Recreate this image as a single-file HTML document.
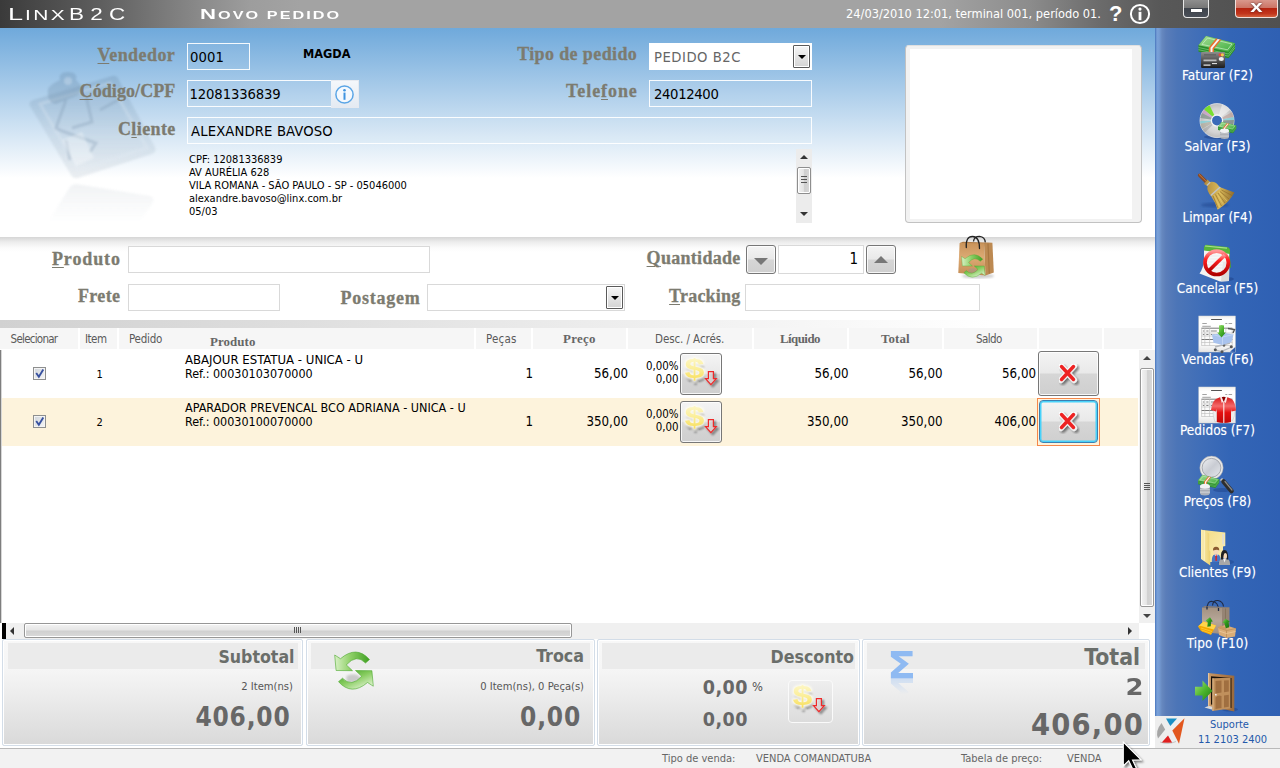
<!DOCTYPE html>
<html lang="pt-BR">
<head>
<meta charset="utf-8">
<title>LinxB2C - Novo pedido</title>
<style>
*{box-sizing:border-box;margin:0;padding:0}
html,body{width:1280px;height:768px;overflow:hidden;background:#fff}
body{position:relative;font-family:"DejaVu Sans Condensed","Liberation Sans",sans-serif;font-size:12px;color:#000}
.abs,.abs-all *{position:absolute}
div,span,svg{position:absolute}
span.i{position:static}
.nw{white-space:nowrap}
/* title bar */
#titlebar{left:0;top:0;width:1280px;height:28px;background:linear-gradient(90deg,#3a3a3a 0px,#444 25px,#5e5e5e 100px,#8a8a8a 200px,#9d9d9d 250px,#a3a3a3 300px,#a3a3a3 940px,#8c8c8c 1030px,#6b6b6b 1100px,#585858 1160px,#505050 1280px)}
.tw{left:0;top:0;height:28px;line-height:28px;white-space:pre;font-family:"Liberation Sans",sans-serif;color:#fff}
.tw .tg{display:inline-block;position:relative;transform-origin:0 50%;vertical-align:baseline}
#dt{right:179px;top:6px;color:#fff;font-size:12.7px;white-space:nowrap}
/* top panel */
#toppanel{left:0;top:28px;width:1155px;height:209px;background:linear-gradient(180deg,#6fa9db 0px,#fff 150px)}
.lbl{font-family:"Liberation Serif",serif;font-weight:bold;color:#7c7b70;font-size:18px;-webkit-text-stroke:.3px #7c7b70;white-space:nowrap;text-align:right;line-height:22px;height:22px}
.lbl u{text-decoration-thickness:1px;text-underline-offset:1.5px}
.inp{border:1px solid rgba(255,255,255,.92);background:rgba(255,255,255,.05);font-size:14.7px;white-space:nowrap;padding-left:3px;line-height:25px}
.inp2{border:1px solid #d9d9d9;background:#fff;font-size:14.7px;white-space:nowrap}
.ddb{border:1px solid #5a5a5a;border-radius:1px;background:linear-gradient(180deg,#f6f6f6,#d4d4d4);box-shadow:inset 0 0 0 1px #fff}
.ddb:after{content:"";position:absolute;left:50%;top:50%;margin:-2px 0 0 -4px;border:4px solid transparent;border-top:4px solid #000;border-bottom:0}
#details{left:189px;top:124.5px;font-size:11px;line-height:13px;white-space:nowrap}
/* sidebar */
#sidebar{left:1155px;top:28px;width:125px;height:688px;background:linear-gradient(90deg,#4876bd 0px,#79a0d8 2px,#769dd5 4px,#6688bf 7px,#5a7db9 11px,#4c75b7 22px,#406eb8 45px,#3365b6 75px,#2f60b3 125px)}
.sb{left:0;width:125px;text-align:center;color:#fff;font-size:13.5px;margin-top:1px;white-space:nowrap;line-height:16px;text-shadow:0 0 1px rgba(255,255,255,.35)}
#support{left:1155px;top:716px;width:125px;height:32px;background:#eee}
#support div{color:#2459ab;font-size:11px;white-space:nowrap;text-align:center;left:30px;width:95px}
/* product panel */
#prodpanel{left:0;top:237px;width:1155px;height:83px;background:linear-gradient(180deg,#d6d6d6 0px,#ececec 5px,#fbfbfb 11px,#fff 15px)}
#band2{left:0;top:320px;width:1155px;height:8px;background:linear-gradient(90deg,#d1d1d1 0,#dcdcdc 250px,#e9e9e9 520px,#f4f4f4 760px,#fff 990px)}
.sbtn{border:1px solid #777;border-radius:3px;background:linear-gradient(180deg,#f4f4f4 0%,#e9e9e9 48%,#d6d6d6 52%,#cfcfcf 100%);box-shadow:inset 0 0 0 1px rgba(255,255,255,.8)}
/* grid */
.hc{top:328px;height:21px;background:#f6f6f6;color:#5a5a5a;font-size:11px;letter-spacing:-.35px;line-height:20px;white-space:nowrap}
.ht{color:#5a5a5a;font-size:11.5px;line-height:18px;white-space:nowrap}
.hb{font-family:"Liberation Serif",serif;font-weight:bold;font-size:12.9px;color:#666}
.hc b{font-family:"Liberation Serif",serif;font-size:12.9px;color:#666;letter-spacing:0}
.row{left:2px;width:1136px;height:48px}
.c{white-space:nowrap;font-size:12.9px;line-height:14px}
.r{text-align:right}
.num{font-size:13.2px}
.cb{width:13px;height:13px;border:1px solid #8e8f8f;background:linear-gradient(135deg,#cfd4db,#f6f6f6);box-shadow:inset 0 0 0 1px #f4f4f4}
/* summary */
.pan{top:639px;height:106.500px;border:1px solid #d3dde8;border-radius:2px;background:linear-gradient(180deg,#f8f8f8 0,#f6f6f6 29px,#f5f5f5 30px,#ececec 56px,#d9d9d9 105px);box-shadow:inset 0 0 0 1px #fff}
.pan>*{margin-top:1px}
.pan .hd{left:4px;right:4px;top:2px;height:26px;background:#ebebeb}
.big{font-weight:bold;color:#676767;white-space:nowrap;text-align:right}
.ttl{font-weight:bold;color:#6a6e6a;white-space:nowrap;text-align:right;font-size:17px}
.sm{color:#555;white-space:nowrap;text-align:right;font-size:11.6px}
#status{left:0;top:748px;width:1280px;height:20px;background:#f2f2f2;border-top:1px solid #b9b9b9;color:#666;font-size:11px}
#status div{top:3px;white-space:nowrap}
</style>
</head>
<body>
<svg width="0" height="0" style="left:0;top:0">
<defs>
<linearGradient id="gold" x1="0" y1="0" x2="0" y2="1"><stop offset="0" stop-color="#fefad8"/><stop offset=".5" stop-color="#fbee98"/><stop offset="1" stop-color="#f7da4a"/></linearGradient>
<filter id="shd" x="-30%" y="-30%" width="170%" height="170%"><feGaussianBlur in="SourceAlpha" stdDeviation="1"/><feOffset dx="2" dy="2.5"/><feComponentTransfer><feFuncA type="linear" slope=".55"/></feComponentTransfer><feMerge><feMergeNode/><feMergeNode in="SourceGraphic"/></feMerge></filter>
<filter id="glow" x="-40%" y="-40%" width="190%" height="190%"><feMorphology in="SourceAlpha" operator="dilate" radius="1.200" result="d"/><feGaussianBlur in="d" stdDeviation="1" result="db"/><feFlood flood-color="#fffdf0" flood-opacity=".95"/><feComposite in2="db" operator="in" result="gl"/><feGaussianBlur in="SourceAlpha" stdDeviation="1.300" result="sb"/><feOffset in="sb" dx="1" dy="3.500" result="so"/><feComponentTransfer in="so" result="sh"><feFuncA type="linear" slope=".5"/></feComponentTransfer><feMerge><feMergeNode in="sh"/><feMergeNode in="gl"/><feMergeNode in="SourceGraphic"/></feMerge></filter>
<filter id="shd2" x="-30%" y="-30%" width="170%" height="170%"><feGaussianBlur in="SourceAlpha" stdDeviation=".8"/><feOffset dx="1.5" dy="2"/><feComponentTransfer><feFuncA type="linear" slope=".5"/></feComponentTransfer><feMerge><feMergeNode/><feMergeNode in="SourceGraphic"/></feMerge></filter>
<g id="dollar">
  <g filter="url(#glow)"><text x="0" y="0" font-family="Liberation Sans,sans-serif" font-weight="bold" font-size="27" fill="url(#gold)" transform="translate(1.400 22.300) scale(1.330 1)">$</text></g>
  <g filter="url(#shd2)"><path d="M25.400 15.700 h5 v7 h2.900 l-5.400 6 l-5.400 -6 h2.900z" fill="#ece4e4" fill-opacity=".55" stroke="#ee2a2a" stroke-width="1.200" stroke-linejoin="miter"/></g>
</g>
<g id="redx">
  <g filter="url(#shd2)"><path d="M2 2 L15 16 M15 2 L2 16" stroke="#fff" stroke-width="6" stroke-linecap="round" stroke-opacity=".8"/><path d="M2.5 2.5 L14.5 15.5 M14.5 2.5 L2.5 15.5" stroke="#ee2424" stroke-width="3.4" stroke-linecap="round"/></g>
</g>
<linearGradient id="sw1" x1="0" y1="0" x2="1" y2="0"><stop offset="0" stop-color="#d9f1c6"/><stop offset=".45" stop-color="#8fd068"/><stop offset="1" stop-color="#3f9f22"/></linearGradient>
<linearGradient id="sw2" x1="1" y1="1" x2=".2" y2="0"><stop offset="0" stop-color="#3a9a20"/><stop offset=".5" stop-color="#86cc5e"/><stop offset="1" stop-color="#e6f6d8"/></linearGradient>
<g id="swap">
  <path d="M12 29 Q18 33 27 27 L23 23 Q17 21 12 24Z" fill="#9a9a9a" opacity=".45" filter="url(#b1s)"/>
  <path d="M35 7.500 Q22 -7 6 6.700 L0.200 3 L1.600 18.500 L18 18.700 L11.800 12.900 Q22 1.500 31 11Z" fill="url(#sw1)" stroke="#4aa82c" stroke-width=".6"/>
  <path d="M35 7.500 Q22 -7 6 6.700 L0.200 3 L1.600 18.500 L18 18.700 L11.800 12.900 Q22 1.500 31 11Z" fill="url(#sw2)" stroke="#4aa82c" stroke-width=".6" transform="rotate(180 19.500 18.600)"/>
</g>
<filter id="b1s"><feGaussianBlur stdDeviation="1"/></filter>
<g id="chk"><path d="M3 6.2 L5.3 9.6 L9.6 2.6" fill="none" stroke="#37509f" stroke-width="2" stroke-linecap="square"/></g>
</defs></svg>
<!-- TITLE BAR -->
<div id="titlebar">
  <div id="t1" class="tw"><span class="tg" style="font-size:17.39px;letter-spacing:0px;font-weight:normal;transform:scaleX(1.559);left:8.24px;top:0.00px">L</span><span class="tg" style="font-size:14.06px;letter-spacing:1.61px;font-weight:normal;transform:scaleX(1.488);left:15.14px;top:0.00px">INX</span><span class="tg" style="font-size:17.3px;letter-spacing:4.8px;font-weight:normal;transform:scaleX(1.3);left:30.78px;top:0.00px">B2C</span></div>
  <div id="t2" class="tw"><span class="tg" style="font-size:14.29px;letter-spacing:0px;font-weight:bold;transform:scaleX(1.552);left:200.40px;top:0.00px">N</span><span class="tg" style="font-size:10.8px;letter-spacing:1.38px;font-weight:bold;transform:scaleX(1.5);left:207.47px;top:0.00px">OVO PEDIDO</span></div>
  <div id="dt">24/03/2010 12:01, terminal 001, período 01.</div>
  <div class="nw" style="left:1109px;top:1px;color:#fff;font-family:'Liberation Sans',sans-serif;font-weight:bold;font-size:22px;line-height:26px">?</div>
  <svg style="left:1129px;top:3px" width="22" height="22" viewBox="0 0 22 22"><circle cx="11" cy="11" r="9.100" fill="none" stroke="#fff" stroke-width="2"/><circle cx="11" cy="6.100" r="1.600" fill="#fff"/><rect x="9.600" y="8.800" width="2.800" height="8.400" fill="#fff"/></svg>
  <div style="left:1183px;top:0;width:26px;height:18px;border:1px solid #e8e8e8;border-top:0;border-radius:0 0 4px 4px;background:linear-gradient(180deg,#8e8e8e 0%,#777 45%,#3f444c 50%,#4a4f58 100%)"><div style="left:7px;top:9px;width:11px;height:3px;background:#fff;box-shadow:0 0 1px #333"></div></div>
  <div style="left:1235px;top:0;width:43px;height:18px;border:1px solid #f0e0dc;border-top:0;border-radius:0 0 4px 4px;background:linear-gradient(180deg,#d9988c 0%,#cc7566 45%,#b52410 50%,#c2351c 80%,#d2603c 100%)"><div class="nw" style="left:0;width:41px;top:-3.500px;text-align:center;color:#fff;font-family:'Liberation Sans',sans-serif;font-weight:bold;font-size:17px;line-height:20px;text-shadow:0 0 2px #422;transform:scaleX(1.300)">x</div></div>

</div>

<!-- TOP PANEL -->
<div id="toppanel">
  <svg id="wm" style="left:20px;top:32px;filter:blur(.9px);opacity:.8" width="150" height="175" viewBox="20 60 150 175">
    <defs><linearGradient id="wmg" x1="0" y1="0" x2="0" y2="1"><stop offset="0" stop-color="#5f7f9c" stop-opacity=".30"/><stop offset=".55" stop-color="#8a9fb2" stop-opacity=".22"/><stop offset="1" stop-color="#a3b2bf" stop-opacity=".26"/></linearGradient>
    <linearGradient id="wmr" x1="0" y1="0" x2="0" y2="1"><stop offset="0" stop-color="#b0bcc6" stop-opacity=".22"/><stop offset="1" stop-color="#b0bcc6" stop-opacity="0"/></linearGradient></defs>
    <path d="M33 100 L112 76 Q117 75 119 80 L155 147 Q157 152 152 154 L78 178 Q73 179 71 175 L30 106 Q28 102 33 100Z" fill="url(#wmg)"/>
    <path d="M40 104 L110 83 L147 148 L79 170Z" fill="none" stroke="#dfe8f0" stroke-opacity=".35" stroke-width="3"/>
    <path d="M48 96 Q46 86 56 82 L60 80 Q58 72 68 72 Q78 72 76 80 L80 84 Q84 92 76 96 L56 104 Q50 104 48 96Z" fill="#5f7f9c" fill-opacity=".32"/>
    <circle cx="68" cy="81" r="4" fill="#cfe0ee" fill-opacity=".5"/>
    <path d="M66 100 L56 128 L62 131 M86 96 L92 122 L72 128 M62 131 L96 143 L90 152 M66 140 L70 160 M100 110 L118 100" fill="none" stroke="#6f8aa2" stroke-opacity=".35" stroke-width="3"/>
    <path d="M62 140 L82 132 L94 158 L76 166Z" fill="#fff" fill-opacity=".35"/>
    <path d="M76 184 L150 196 Q156 198 152 204 L140 222 L48 222 L68 190 Q71 184 76 184Z" fill="url(#wmr)"/>
  </svg>
  <div class="lbl" style="right:979.78px;top:15.9px;letter-spacing:0.42px"><u>V</u>endedor</div>
  <div class="lbl" style="right:979.62px;top:52.4px;letter-spacing:0.08px"><u>C</u>ódigo/CPF</div>
  <div class="lbl" style="right:979.31px;top:89.9px;letter-spacing:0.39px">C<u>l</u>iente</div>
  <div class="lbl" style="right:517.82px;top:15.4px;letter-spacing:0.38px">Tipo de pedido</div>
  <div class="lbl" style="right:517.28px;top:52.2px;letter-spacing:0.92px">Tele<u>f</u>one</div>
  <div class="inp" style="left:187px;top:15px;width:63px;height:27px;padding-left:2px;letter-spacing:.1px">0001</div>
  <div class="nw" id="magda" style="left:303px;top:18px;font-weight:bold;font-size:12.6px;line-height:15px">MAGDA</div>
  <div class="inp" style="left:187px;top:52px;width:145px;height:27px;padding-left:1.500px;letter-spacing:-.12px">12081336839</div>
  <div class="inp" style="left:187px;top:89px;width:625px;height:27px;letter-spacing:.13px">ALEXANDRE BAVOSO</div>
  <div class="inp2" style="left:649px;top:15px;width:163px;height:27px;border-color:#fff;color:#666;padding-left:4px;line-height:25px;letter-spacing:.5px">PEDIDO B2C</div>
  <div class="ddb" style="left:793px;top:17px;width:17px;height:23px"></div>
  <div class="inp" style="left:649px;top:52px;width:163px;height:27px;padding-left:4px;letter-spacing:-.35px">24012400</div>

  <div style="left:331px;top:52px;width:28px;height:28px;border:1px solid #e6eaf0;border-left:0;background:linear-gradient(180deg,#f4f7fb,#e4eaf2)">
    <svg style="left:3px;top:3px" width="21" height="21" viewBox="0 0 21 21"><circle cx="10.5" cy="10.5" r="8.6" fill="#f4f9fe" stroke="#5aa5e6" stroke-width="1.5"/><circle cx="10.5" cy="6.3" r="1.3" fill="#3f94e0"/><rect x="9.5" y="8.6" width="2" height="7.2" fill="#3f94e0"/></svg>
  </div>
  <div id="tsb" style="left:796px;top:121px;width:16px;height:74px;background:#ececec">
    <div style="left:4px;top:6px;border:4px solid transparent;border-bottom:4px solid #333;border-top:0"></div>
    <div style="left:1px;top:18px;width:14px;height:27px;border:1px solid #8e8e8e;border-radius:2px;background:linear-gradient(90deg,#f2f2f2 0%,#e4e4e4 45%,#cfcfcf 55%,#d8d8d8 100%);box-shadow:inset 0 0 0 1px #fff">
      <div style="left:3px;top:8px;width:6px;height:1px;background:#555;box-shadow:0 3px 0 #555,0 6px 0 #555"></div>
    </div>
    <div style="left:4px;top:63px;border:4px solid transparent;border-top:4px solid #333;border-bottom:0"></div>
  </div>
  <div style="left:905px;top:17px;width:237px;height:178px;border:1px solid #c2c2c2;border-top-color:#e0e0e0;border-radius:4px;background:#f2f2f2">
    <div style="left:4px;top:3px;width:222px;height:170px;background:#fff"></div>
  </div>
  <div id="details">CPF: 12081336839<br>AV AURÉLIA 628<br>VILA ROMANA - SÃO PAULO - SP - 05046000<br>alexandre.bavoso@linx.com.br<br>05/03</div>
</div>

<!-- SIDEBAR -->
<div id="sidebar">
  <!-- icons drawn in page coordinates via viewBox -->
  <svg style="left:35px;top:0" width="60" height="688" viewBox="1190 28 60 688">
    <defs>
      <linearGradient id="gr1" x1="0" y1="0" x2="1" y2="1"><stop offset="0" stop-color="#a5dd94"/><stop offset="1" stop-color="#3fae3f"/></linearGradient>
      <linearGradient id="card" x1="0" y1="0" x2="0" y2="1"><stop offset="0" stop-color="#8e8e8e"/><stop offset=".5" stop-color="#555"/><stop offset="1" stop-color="#1c1c1c"/></linearGradient>
      <linearGradient id="doc" x1="0" y1="0" x2="0" y2="1"><stop offset="0" stop-color="#f0f0ee"/><stop offset=".12" stop-color="#fff"/><stop offset=".8" stop-color="#fafafa"/><stop offset="1" stop-color="#e4e4e4"/></linearGradient>
      <linearGradient id="redg" x1="0" y1="0" x2="0" y2="1"><stop offset="0" stop-color="#f99"/><stop offset=".35" stop-color="#f22"/><stop offset="1" stop-color="#b00000"/></linearGradient>
      <linearGradient id="shirt" x1="0" y1="0" x2="0" y2="1"><stop offset="0" stop-color="#d81818"/><stop offset=".35" stop-color="#f46a6a"/><stop offset=".6" stop-color="#e41010"/><stop offset="1" stop-color="#c00808"/></linearGradient>
      <linearGradient id="fold" x1="0" y1="0" x2="1" y2="0"><stop offset="0" stop-color="#fbeeb4"/><stop offset="1" stop-color="#ecd06e"/></linearGradient>
      <linearGradient id="fold2" x1="0" y1="0" x2="1" y2="1"><stop offset="0" stop-color="#f3dc86"/><stop offset="1" stop-color="#fbefb8"/></linearGradient>
      <linearGradient id="bag" x1="0" y1="0" x2="0" y2="1"><stop offset="0" stop-color="#a39180"/><stop offset=".5" stop-color="#b7a799"/><stop offset="1" stop-color="#a08f80"/></linearGradient>
      <linearGradient id="garr" x1="0" y1="0" x2="1" y2="1"><stop offset="0" stop-color="#a6e37c"/><stop offset=".5" stop-color="#4db52d"/><stop offset="1" stop-color="#1f7d12"/></linearGradient>
      <linearGradient id="garr2" x1="0" y1="0" x2="1" y2="1"><stop offset="0" stop-color="#8fd662"/><stop offset=".45" stop-color="#2f9a1c"/><stop offset="1" stop-color="#176a0c"/></linearGradient>
      <linearGradient id="wood" x1="0" y1="0" x2="1" y2="0"><stop offset="0" stop-color="#c99a68"/><stop offset=".5" stop-color="#b27d4c"/><stop offset="1" stop-color="#9a6a3c"/></linearGradient>
      <linearGradient id="lens" x1="0" y1="0" x2="1" y2="1"><stop offset="0" stop-color="#f4f5f7"/><stop offset=".5" stop-color="#c9ccd3"/><stop offset="1" stop-color="#e9ebef"/></linearGradient>
      <linearGradient id="broom" x1="0" y1="0" x2="1" y2="0"><stop offset="0" stop-color="#b08a3e"/><stop offset=".5" stop-color="#d8b858"/><stop offset="1" stop-color="#8e6a2c"/></linearGradient>
      <radialGradient id="cdg" cx=".5" cy=".5" r=".5"><stop offset="0" stop-color="#e8e8e8"/><stop offset=".7" stop-color="#d4d4d4"/><stop offset="1" stop-color="#bdbdbd"/></radialGradient>
      <filter id="b1"><feGaussianBlur stdDeviation=".6"/></filter>
      <filter id="b2"><feGaussianBlur stdDeviation="1.2"/></filter>
      <g id="money"><path d="M0 9.3 L7.5 0 L36.5 7.2 L36.5 13.7 L30 22.3 L0 15.8Z" fill="#2c8c2c"/><path d="M0 11.5 L30 18 L36.5 9.4 M0 13.7 L30 20.2 L36.5 11.6" stroke="#7ed07e" stroke-width=".7" fill="none"/><path d="M7.5 0 L36.5 7.2 L30 15.8 L0 9.3Z" fill="url(#gr1)"/><path d="M9 2 L33.5 8 L29 13.8 L3.5 8.4Z" fill="none" stroke="#d8f2d0" stroke-width=".8" stroke-opacity=".8"/><path d="M17.5 2.4 L22.8 3.7 L15.5 12.7 L15.5 19.2 L10.3 18 L10.3 11.5Z" fill="#e8702a"/><path d="M19.2 2.9 L21.2 3.4 L14 12.3 L14 18.8 L12 18.3 L12 11.8Z" fill="#f4f4f4"/></g>
      <g id="coins"><ellipse cx="4.5" cy="8.5" rx="4.5" ry="2.2" fill="#aeb2b8"/><rect x="0" y="2.5" width="9" height="6" fill="#c6c9ce"/><path d="M0 4.5 h9 M0 6.5 h9" stroke="#8e9299" stroke-width=".6"/><ellipse cx="4.5" cy="2.5" rx="4.5" ry="2.2" fill="#f1f2f4"/></g>
      <g id="docu"><rect x="0" y="0" width="36.5" height="36" fill="url(#doc)" stroke="#d8d8d4" stroke-width=".5"/><rect x="12.3" y="3" width="10.8" height="1" fill="#555"/><path d="M3.5 7.5 h4.5 M26.5 7.5 h2 M29.8 7.5 h3.5 M3.5 10.3 h8.5" stroke="#999" stroke-width=".9"/><path d="M2.6 12.2 h31 M2.6 23.5 h31" stroke="#777" stroke-width="1"/><path d="M2.6 17 h31 M2.6 20 h31 M2.6 26.5 h31 M2.6 29.5 h31 M2.8 12 v17.5 M6 12 v17.5 M10.8 12 v17.5 M27 12 v17.5 M33.4 12 v17.5" stroke="#bbb" stroke-width=".6"/><path d="M4 15 h1.5 M7.5 15 h2.2 M12 15 h6 M4 18.5 h1.5 M7.5 18.5 h2.2 M12 18.5 h4" stroke="#777" stroke-width=".9"/></g>
    </defs>
    <!-- Faturar -->
    <use href="#money" x="1198.5" y="36"/>
    <rect x="1201" y="52" width="24" height="16" rx="1.2" fill="url(#card)"/>
    <rect x="1204" y="54" width="12" height="1.6" fill="#666"/><rect x="1203.5" y="59.5" width="13" height="1.8" fill="#bdbdbd"/><rect x="1203.5" y="64.5" width="7" height="1.2" fill="#eee"/><rect x="1212" y="63" width="5" height="1.1" fill="#ddd"/>
    <circle cx="1220" cy="54.8" r="1.6" fill="#e64a3c"/><circle cx="1222.4" cy="54.8" r="1.6" fill="#f2c84a"/><ellipse cx="1221.3" cy="59" rx="2.6" ry="2.1" fill="#f0f0f0"/>
    <!-- Salvar -->
    <ellipse cx="1217" cy="137" rx="13" ry="2" fill="#1d3f86" opacity=".5" filter="url(#b1)"/>
    <circle cx="1217" cy="120.6" r="17" fill="url(#cdg)" stroke="#e9e9e9" stroke-width=".8"/>
    <g filter="url(#b1)"><path d="M1217 120.6 L1204 109.5 A17 17 0 0 1 1209.5 105.3Z" fill="#6fe01e" opacity=".9"/><path d="M1217 120.6 L1202 113 A17 17 0 0 1 1204 109.5Z" fill="#c79ac7" opacity=".75"/><path d="M1217 120.6 L1200.3 118 A17 17 0 0 1 1202 113Z" fill="#7f8f88" opacity=".75"/><path d="M1217 120.6 L1200.3 123.8 A17 17 0 0 1 1200.3 121Z" fill="#7fd0d8" opacity=".8"/><path d="M1217 120.6 L1202 129 A17 17 0 0 1 1200.3 123.8Z" fill="#a9a393" opacity=".6"/><path d="M1217 120.6 L1232 112 A17 17 0 0 1 1233.6 117Z" fill="#b99a92" opacity=".6"/><path d="M1217 120.6 L1233.6 117 A17 17 0 0 1 1234 120Z" fill="#7fd0d8" opacity=".8"/><path d="M1217 120.6 L1234 120 A17 17 0 0 1 1232.8 126Z" fill="#75857d" opacity=".75"/><path d="M1217 120.6 L1222 104.5 A17 17 0 0 1 1230 110Z" fill="#f4f4f4" opacity=".6"/><path d="M1217 120.6 L1205 132.5 A17 17 0 0 1 1202.6 129.5Z" fill="#999" opacity=".5"/></g>
    <circle cx="1217" cy="120.6" r="5.6" fill="#3a6ab8" stroke="#f4f4f4" stroke-width="1.3"/>
    <use href="#money" transform="translate(1218 122) scale(.5)"/>
    <use href="#coins" x="1220" y="128.3"/>
    <!-- Limpar -->
    <ellipse cx="1215" cy="205" rx="14" ry="2.5" fill="#1d3f86" opacity=".45" filter="url(#b2)"/>
    <path d="M1199.6 175.2 L1207 182.6" stroke="#8a4a22" stroke-width="3.4" stroke-linecap="round"/><path d="M1199.3 174.6 L1206 181.2" stroke="#c07a48" stroke-width="1" stroke-linecap="round"/>
    <path d="M1204 184 L1207.5 179.5 L1210 182 Q1216 181 1219.5 187 L1234.5 192.6 Q1229 203 1217.6 209.8 Q1216 203 1211 196 Q1206.500 191 1207.5 186Z" fill="url(#broom)"/>
    <path d="M1213 196 L1218 208 M1215.500 194.500 L1221.500 206 M1218 193 L1225 203 M1220 191.500 L1229 199 M1221.500 190 L1232 195.500" stroke="#8a6424" stroke-width=".8" opacity=".7"/>
    <path d="M1214 195 L1219.800 207 M1217 194 L1223.500 204.500 M1219 192 L1227 201" stroke="#ecd070" stroke-width=".7" opacity=".8"/>
    <path d="M1210.800 195.500 L1220.200 187" stroke="#bfc3c8" stroke-width="1.500"/><path d="M1206.800 185.500 L1210.200 182.200" stroke="#bfc3c8" stroke-width="1.200"/>
    <!-- Cancelar -->
    <ellipse cx="1226" cy="279" rx="8" ry="2" fill="#1d3f86" opacity=".5" filter="url(#b1)"/>
    <path d="M1204 250 L1229.500 251 L1229 281 L1220 281.500 L1199.500 273.500 Q1203.500 268 1204 260Z" fill="#f4f4f2"/>
    <path d="M1221 281.500 L1223 262 L1229.300 262 L1229 281Z" fill="#dcdcda"/>
    <path d="M1206 256 h20 M1206 259 h20 M1206 262 h20 M1206 265 h20 M1205.500 268 h20 M1204.500 271 h19" stroke="#d9dde4" stroke-width=".7"/>
    <path d="M1204 249.800 Q1203.500 245 1206.500 244.700 L1227 247 Q1230 247.500 1230 250.500 L1230 254 L1204 250.500Z" fill="#57b43a"/><path d="M1205 246 L1227 248.200" stroke="#a8e08a" stroke-width="1.200"/>
    <path d="M1229 249 L1231 267.500 L1229.600 268 Z" fill="#4aa32e"/>
    <circle cx="1216.700" cy="262.800" r="11.700" fill="#fff" fill-opacity=".35"/>
    <circle cx="1216.700" cy="262.800" r="11.700" fill="none" stroke="url(#redg)" stroke-width="3.700"/>
    <path d="M1208.800 270.800 L1224.800 255" stroke="url(#redg)" stroke-width="3.600"/>
    <!-- Vendas -->
    <use href="#docu" x="1198.800" y="316"/>
    <path d="M1230 351.800 L1235.300 347 L1235.300 352Z" fill="#2c5cae"/>
    <path d="M1215 347 L1230 343 M1216 350 L1221 351.500 L1232 347" stroke="#b4b7bc" stroke-width="1.300" fill="none"/>
    <circle cx="1215.300" cy="349.800" r="1.500" fill="#555"/><circle cx="1222" cy="351.800" r="1.500" fill="#555"/><circle cx="1231.300" cy="346.800" r="1.500" fill="#555"/><circle cx="1224" cy="345.500" r="1.300" fill="#666"/>
    <path d="M1228 328.500 L1234.500 329.500 L1233 333" stroke="#555" stroke-width="1.400" fill="none"/>
    <path d="M1212 334.500 L1225 333 L1233.500 334.500 L1231.500 342 L1222.500 345 L1213.500 342.800Z" fill="#a9c3ee"/><path d="M1212 334.500 L1222.500 337 L1233.500 334.500 M1222.500 337 L1222.500 345" stroke="#c9daf6" stroke-width=".8" fill="none"/>
    <path d="M1219 325.500 Q1221.500 324.500 1224 325.500 L1224 332.500 L1225.800 332.500 L1221.500 337.500 L1217.200 332.500 L1219 332.500Z" fill="url(#garr)"/>
    <!-- Pedidos -->
    <use href="#docu" x="1198.800" y="387"/>
    <path d="M1213 410 L1217 410 L1217.500 421 L1215 422 Q1212.500 416 1213 410Z M1231 410 L1235 410 Q1235.500 416 1232.500 420.500 L1230.500 420Z" fill="#eee" stroke="#bbb" stroke-width=".4"/>
    <path d="M1220.500 397 L1227 397 L1231.500 399 Q1235.500 402 1236 410.500 L1231.500 411.500 L1231 409 L1231 422 Q1224 424 1216.800 422 L1216.800 409 L1216 411.500 L1211 410 Q1212 401.500 1216 399Z" fill="url(#shirt)"/>
    <path d="M1221 397.500 Q1223.800 396 1226.500 397.500 L1224.500 401.500 L1223.300 401.500Z" fill="#8a0000"/>
    <path d="M1220 397 L1221.500 396.300 L1223.500 401.500 L1221.800 403Z M1227.500 397 L1226 396.300 L1224 401.500 L1225.800 403Z" fill="#f6eaea"/>
    <path d="M1223.800 401.500 L1223.800 423" stroke="#fbeaea" stroke-width="1.100"/>
    <!-- Precos -->
    <ellipse cx="1222" cy="490" rx="9" ry="2" fill="#1d3f86" opacity=".45" filter="url(#b1)"/>
    <path d="M1221 479 L1224 482" stroke="#c8c8c8" stroke-width="3"/><path d="M1223.500 481.500 L1231.500 491" stroke="#2e2e2e" stroke-width="4.600" stroke-linecap="round"/><path d="M1225 481.500 L1232 490" stroke="#8a8a8a" stroke-width="1.200" stroke-linecap="round"/>
    <circle cx="1211.500" cy="467.800" r="10.600" fill="url(#lens)" stroke="#e8e8e8" stroke-width="2.200"/><circle cx="1211.500" cy="467.800" r="9.400" fill="none" stroke="#8f9298" stroke-width=".7"/><circle cx="1211.500" cy="467.800" r="11.700" fill="none" stroke="#9a9da3" stroke-width=".5"/>
    <use href="#money" transform="translate(1198 475) scale(.58)"/>
    <use href="#coins" transform="translate(1200 483.300) scale(1.100 1.150)"/>
    <!-- Clientes -->
    <ellipse cx="1226" cy="562" rx="8" ry="2.500" fill="#1d3f86" opacity=".4" filter="url(#b1)"/>
    <path d="M1203 530 L1225.300 532.500 L1225.300 546 L1223 546.500 L1223 562 L1210 562 L1203 556Z" fill="url(#fold2)"/>
    <rect x="1222.300" y="534" width="1.700" height="10.500" fill="#ddd" opacity=".9"/>
    <path d="M1201 529.600 L1204.500 530.500 L1209.200 533.500 L1209.200 550 L1210.300 551.500 L1210.300 565.500 L1201 559Z" fill="url(#fold)"/>
    <path d="M1204.300 530.500 L1204.300 561" stroke="#fdf5cf" stroke-width=".8"/>
    <path d="M1211.800 562 Q1211.500 555.500 1214.500 554.500 L1218 554.500 Q1221 555.500 1221 562Z" fill="#4a78c4"/><path d="M1215.300 554.500 L1217 554.500 L1216.800 561 L1215.500 561Z" fill="#e02020"/><path d="M1214.300 554.500 L1215.500 556 L1216.200 554.500 L1217 556 L1218 554.500" fill="#fff"/>
    <ellipse cx="1216" cy="551" rx="2.700" ry="3.300" fill="#f6d9b8"/><path d="M1213 550.500 Q1212.800 546.800 1216 546.800 Q1219.500 546.800 1219.200 550.500 Q1217.500 548.800 1213 550.500Z" fill="#8a5a30"/>
    <path d="M1219 565 Q1218.500 560 1221.500 559 L1227.500 559 Q1230.300 560 1230 565Z" fill="#a7a7a7"/><path d="M1223.300 559 L1224.500 562.500 L1225.800 559Z" fill="#f0f0f0"/>
    <path d="M1221 559.500 Q1220 550 1224.500 550 Q1228.500 550 1228.300 559.500 L1226.500 559.500 L1226.800 555 Q1225 552.500 1223 554 L1223 559.500Z" fill="#222"/>
    <ellipse cx="1225" cy="556" rx="2" ry="2.900" fill="#f6d9b8"/><path d="M1222.500 556 Q1222.500 551.500 1226 552 Q1223.500 553 1223.300 558Z" fill="#222"/>
    <!-- Tipo -->
    <path d="M1207 609.500 Q1207 600.500 1212.500 601.500 Q1218.500 602 1218.500 610.500" fill="none" stroke="#1f2a44" stroke-width="1.100"/><path d="M1212.500 605.500 Q1213 600 1218 600.500 Q1223 601.500 1223.500 606.500" fill="none" stroke="#1f2a44" stroke-width="1.100"/>
    <path d="M1202 607.500 L1222 607.500 L1222 634 L1202 632Z" fill="url(#bag)"/><path d="M1222 607.500 L1229.500 607.300 L1229.500 632.500 L1222 634Z" fill="#968474"/><path d="M1225.500 608.500 L1225.500 633" stroke="#85735f" stroke-width="1"/><path d="M1202 607.500 L1205 606 L1229.500 607.300 L1222 607.800Z" fill="#8e7d6c"/>
    <path d="M1207 606.500 v3 M1218.500 608 v3" stroke="#1f2a44" stroke-width="1.300"/>
    <path d="M1198 626.500 L1203.500 621.500 L1216 625.500 L1211 635 L1201 631Z" fill="#f5a800"/><path d="M1198 626.500 L1203.500 621.500 L1216 625.500 L1213.800 629.500 L1200 625.800Z" fill="#ffd44a"/><path d="M1201 628 L1212 631.500 M1201.500 630 L1211.500 633.500" stroke="#ffcf40" stroke-width=".7"/>
    <path d="M1205.500 620.500 L1210 617.300 L1212.800 621.500 L1211.200 621.800 L1210.700 626.200 L1207.300 626.800 L1207.800 622.500Z" fill="url(#garr2)"/>
    <path d="M1218 627.500 L1225 625 L1236 628.500 L1235 636.500 L1226.500 638 L1219 635Z" fill="#d9ad78"/><path d="M1218 627.500 L1226.500 630.500 L1236 628.500 M1226.500 630.500 L1226.500 638" stroke="#b98a52" stroke-width=".7" fill="none"/><path d="M1218 627.500 L1221 625.500 L1226.500 628 L1226.500 630.500Z" fill="#c99a64"/><path d="M1219 631 L1226.500 633.500 L1235.500 631.500" stroke="#ecc99a" stroke-width=".8" fill="none"/>
    <path d="M1222.300 622.500 L1225.500 618.800 L1229.800 621.500 L1228.600 622.300 L1229.200 627.200 L1225.800 628.200 L1224.300 623Z" fill="url(#garr2)"/>
    <!-- Sair (door) -->
    <ellipse cx="1230" cy="709.500" rx="8" ry="2" fill="#1d3f86" opacity=".45" filter="url(#b1)"/>
    <path d="M1204.500 707.500 L1212.500 704.500 L1212.500 709.800Z" fill="#d9d9d9"/>
    <path d="M1208 673 L1234.300 675.800 L1234.300 711.400 L1208 705.800Z" fill="url(#wood)"/><path d="M1208 673 L1209.200 673.100 L1209.200 706 L1208 705.800Z" fill="#e4c49c"/>
    <path d="M1211 676.200 L1231.500 678 L1231.500 708 L1211 704.500Z" fill="#1a120a"/>
    <path d="M1212.400 678.300 L1230.500 677.700 L1230.500 708.600 L1212.400 711Z" fill="#c0905c"/>
    <path d="M1212.400 678.300 L1213.500 678.300 L1213.500 710.800 L1212.400 711Z" fill="#ddb88a"/>
    <path d="M1215.500 681 L1221.500 680.600 L1221.500 692.500 L1215.500 693.500Z M1224 680.400 L1228.800 680.200 L1228.800 691.500 L1224 692.200Z M1215.500 697.500 Q1218.500 694.500 1221.500 696 L1221.500 708 L1215.500 709Z M1224 695.500 L1228.800 694.800 L1228.800 706.800 L1224 707.600Z" fill="#a06f40"/>
    <circle cx="1215.800" cy="694.700" r=".9" fill="#eee"/>
    <path d="M1195 686.800 L1202.500 686.800 L1202.500 680.500 L1212.600 691 L1202.500 701 L1202.500 695.500 L1195 695.500Z" fill="url(#garr)"/>
  </svg>
  <div class="sb" style="top:38px">Faturar (F2)</div>
  <div class="sb" style="top:109px">Salvar (F3)</div>
  <div class="sb" style="top:180px">Limpar (F4)</div>
  <div class="sb" style="top:251px">Cancelar (F5)</div>
  <div class="sb" style="top:322px">Vendas (F6)</div>
  <div class="sb" style="top:393px">Pedidos (F7)</div>
  <div class="sb" style="top:464px">Preços (F8)</div>
  <div class="sb" style="top:535px">Clientes (F9)</div>
  <div class="sb" style="top:606px">Tipo (F10)</div>
</div>
<div id="support">
<svg style="left:0;top:0" width="32" height="32" viewBox="1155 716 32 32"><path d="M1166 718.500 L1177 718.500 L1170.300 726Z" fill="#1b8fc4"/><path d="M1161.500 723 L1165.200 729.500 L1158 738.500 Q1155 731 1161.500 723Z" fill="#a6a6a6"/><path d="M1168 735.500 L1172.200 742.700 L1161.500 742.700Z" fill="#e02020"/><path d="M1184.500 718.300 L1172.300 730.500 L1179 743.800Z" fill="#e2571e"/><path d="M1160 742 Q1168 745 1176 741.500" stroke="#a6a6a6" stroke-width=".8" fill="none" opacity=".7"/></svg>
  <div style="top:1.500px;margin-left:-3px">Suporte</div>
  <div style="top:17px">11 2103 2400</div>
</div>

<!-- PRODUCT PANEL -->
<div id="prodpanel">
  <div class="lbl" style="right:1034.11px;top:10.7px;letter-spacing:0.89px"><u>P</u>roduto</div>
  <div class="lbl" style="right:1034.64px;top:47.9px;letter-spacing:0.36px">Frete</div>
  <div class="lbl" style="right:734.44px;top:49.9px;letter-spacing:0.76px">Postagem</div>
  <div class="lbl" style="right:414.40px;top:10.2px;letter-spacing:0.3px"><u>Q</u>uantidade</div>
  <div class="lbl" style="right:414.48px;top:48.1px;letter-spacing:0.22px"><u>T</u>racking</div>
  <div class="inp2" style="left:128px;top:9px;width:302px;height:27px"></div>
  <div class="inp2" style="left:128px;top:47px;width:152px;height:27px"></div>
  <div class="inp2" style="left:427px;top:47px;width:198px;height:27px"></div>
  <div class="ddb" style="left:606px;top:49px;width:17px;height:23px"></div>
  <div class="sbtn" style="left:746px;top:8px;width:30px;height:29px"><div style="left:7px;top:12px;border:7px solid transparent;border-top:7px solid #777;border-bottom:0"></div></div>
  <div class="inp2 r" style="left:778px;top:8px;width:86px;height:29px;padding-right:5px;line-height:26px;font-size:15px">1</div>
  <div class="sbtn" style="left:866px;top:8px;width:30px;height:29px"><div style="left:7px;top:10px;border:7px solid transparent;border-bottom:7px solid #777;border-top:0"></div></div>
  <div class="inp2" style="left:745px;top:47px;width:235px;height:27px"></div>
</div>
<div id="band2"></div>
<svg style="left:950px;top:232px" width="50" height="50" viewBox="950 232 50 50">
  <defs><linearGradient id="bagt" x1="0" y1="0" x2="0" y2="1"><stop offset="0" stop-color="#c9935a"/><stop offset=".45" stop-color="#dcaa74"/><stop offset="1" stop-color="#c48c54"/></linearGradient></defs>
  <ellipse cx="978" cy="276" rx="16" ry="2.500" fill="#777" opacity=".35" filter="url(#b1s)"/>
  <path d="M973.500 241.500 Q974 236.300 979.500 236.300 Q985 236.800 985.300 242.500" fill="none" stroke="#222" stroke-width="1.300"/>
  <path d="M959.600 243 L984 243 L985.500 275.500 L958.300 273Z" fill="url(#bagt)"/>
  <path d="M984 243 L992.400 242.800 L993.800 272.500 L985.500 275.500Z" fill="#bd8a52"/>
  <path d="M988 243.500 L989.300 273.500" stroke="#a87640" stroke-width="1.200"/>
  <path d="M959.600 243 L963 241.800 L992.400 242.800 L984 243.300Z" fill="#b07c46"/>
  <path d="M966.300 247.500 Q965.500 236.500 972.500 236.500 Q979.500 236.500 979.500 248.500" fill="none" stroke="#222" stroke-width="1.300" stroke-linecap="round"/>
  <use href="#swap" transform="translate(961.400 254.600) scale(.61)"/>
</svg>


<!-- GRID -->
<div id="grid" style="left:0;top:328px;width:1155px;height:312px">
</div>
<div class="hc" style="left:0px;width:78px"></div><div class="hc" style="left:80px;width:37px"></div><div class="hc" style="left:119px;width:355px"></div><div class="hc" style="left:476px;width:55px"></div><div class="hc" style="left:533px;width:93px"></div><div class="hc" style="left:628px;width:124px"></div><div class="hc" style="left:754px;width:93px"></div><div class="hc" style="left:849px;width:93px"></div><div class="hc" style="left:944px;width:93px"></div><div class="hc" style="left:1039px;width:63px"></div><div class="hc" style="left:1104px;width:48px"></div>
<div class="ht" style="left:10.6px;top:330px;letter-spacing:-0.75px">Selecionar</div><div class="ht" style="left:85px;top:330px;letter-spacing:-0.49px">Item</div><div class="ht" style="left:129px;top:330px;letter-spacing:-0.24px">Pedido</div><div class="ht hb" style="left:210px;top:332.5px;letter-spacing:0.09px">Produto</div><div class="ht" style="left:486px;top:330px;letter-spacing:0.19px">Peças</div><div class="ht hb" style="left:563px;top:329.5px;letter-spacing:0.3px">Preço</div><div class="ht" style="left:655px;top:330px;letter-spacing:-0.08px">Desc. / Acrés.</div><div class="ht hb" style="left:780px;top:329.5px;letter-spacing:-0.54px">Líquido</div><div class="ht hb" style="left:881px;top:329.5px;letter-spacing:0.1px">Total</div><div class="ht" style="left:976px;top:330px;letter-spacing:-0.59px">Saldo</div>
<div style="left:0;top:350px;width:1px;height:273px;background:#7e7e7e;box-shadow:1px 0 0 rgba(140,140,140,.35)"></div>

<div class="row" style="top:350px">
  <div class="cb" style="left:31px;top:17px"><svg style="left:0;top:0" width="11" height="11" viewBox="0 0 12 12"><use href="#chk"/></svg></div>
  <div class="c" style="left:94.5px;top:18px;font-size:11px">1</div>
  <div class="c" style="left:183px;top:3px"><span class="i" style="font-size:13.05px">ABAJOUR ESTATUA - UNICA - U</span><br><span class="i" style="font-size:12.45px">Ref.: 00030103070000</span></div>
  <div class="c r num" style="left:480px;width:51px;top:17px">1</div>
  <div class="c r num" style="left:540px;width:86px;top:17px">56,00</div>
  <div class="c r" style="left:630px;width:46.5px;top:9.5px;font-size:11.4px;line-height:13px">0,00%<br>0,00</div>
  <div class="sbtn" style="left:678px;top:3px;width:42px;height:42px"><svg style="left:2px;top:2px" width="38" height="38" viewBox="0 0 38 38"><use href="#dollar"/></svg></div>
  <div class="c r num" style="left:760px;width:86.5px;top:17px">56,00</div>
  <div class="c r num" style="left:855px;width:85.5px;top:17px">56,00</div>
  <div class="c r num" style="left:950px;width:84px;top:17px">56,00</div>
  <div class="sbtn" style="left:1036px;top:1px;width:61px;height:45px"><svg style="left:20px;top:12px" width="24" height="24" viewBox="0 0 24 24"><use href="#redx"/></svg></div>
</div>
<div class="row" style="top:398px;background:#fdf3dc">
  <div class="cb" style="left:31px;top:17px"><svg style="left:0;top:0" width="11" height="11" viewBox="0 0 12 12"><use href="#chk"/></svg></div>
  <div class="c" style="left:94.5px;top:18px;font-size:11px">2</div>
  <div class="c" style="left:183px;top:3px"><span class="i" style="font-size:12.5px">APARADOR PREVENCAL BCO ADRIANA - UNICA - U</span><br><span class="i" style="font-size:12.45px">Ref.: 00030100070000</span></div>
  <div class="c r num" style="left:480px;width:51px;top:17px">1</div>
  <div class="c r num" style="left:540px;width:86px;top:17px">350,00</div>
  <div class="c r" style="left:630px;width:46.5px;top:9.5px;font-size:11.4px;line-height:13px">0,00%<br>0,00</div>
  <div class="sbtn" style="left:678px;top:3px;width:42px;height:42px"><svg style="left:2px;top:2px" width="38" height="38" viewBox="0 0 38 38"><use href="#dollar"/></svg></div>
  <div class="c r num" style="left:760px;width:86.5px;top:17px">350,00</div>
  <div class="c r num" style="left:855px;width:85.5px;top:17px">350,00</div>
  <div class="c r num" style="left:950px;width:84px;top:17px">406,00</div>
  <div style="left:1035px;top:0;width:63px;height:48px;border:1px solid #f5874a"></div>
  <div class="sbtn" style="left:1037px;top:2px;width:59px;height:43px;border:1px solid #3c7fb1;border-radius:4px;box-shadow:inset 0 0 0 1.5px #48d2fa"><svg style="left:19px;top:11px" width="24" height="24" viewBox="0 0 24 24"><use href="#redx"/></svg></div>
</div>


<!-- grid scrollbars -->
<div style="left:1139px;top:350px;width:16px;height:273px;background:#f0f0f0">
  <div style="left:4px;top:6px;border:4px solid transparent;border-bottom:4px solid #444;border-top:0"></div>
  <div style="left:1px;top:18px;width:14px;height:239px;border:1px solid #979797;border-radius:2px;background:linear-gradient(90deg,#f3f3f3 0%,#e6e6e6 45%,#d0d0d0 55%,#dadada 100%);box-shadow:inset 0 0 0 1px #fff"><div style="left:3px;top:114px;width:6px;height:1px;background:#555;box-shadow:0 2px 0 #555,0 4px 0 #555,0 6px 0 #555"></div></div>
  <div style="left:4px;top:264px;border:4px solid transparent;border-top:4px solid #444;border-bottom:0"></div>
</div>
<div style="left:2px;top:623px;width:1137px;height:16px;background:#f0f0f0">
  <div style="left:0;top:0;width:4px;height:16px;background:#000"></div>
  <div style="left:8px;top:4px;border:4px solid transparent;border-right:4px solid #333;border-left:0"></div>
  <div style="left:22px;top:0;width:548px;height:15px;border:1px solid #979797;border-radius:2px;background:linear-gradient(180deg,#f3f3f3 0%,#e6e6e6 45%,#d0d0d0 55%,#dadada 100%);box-shadow:inset 0 0 0 1px #fff"><div style="left:269px;top:3px;width:1px;height:6px;background:#555;box-shadow:2px 0 0 #555,4px 0 0 #555,6px 0 0 #555"></div></div>
  <div style="left:1126px;top:4px;border:4px solid transparent;border-left:4px solid #333;border-right:0"></div>
</div>


<!-- SUMMARY -->
<div class="pan" style="left:2px;width:301px">
  <div class="hd" style="left:5px"></div>
  <div class="ttl" style="right:7.5px;top:5.5px;font-size:17.6px">Subtotal</div>
  <div class="sm" style="right:9px;top:39px;font-size:11.15px">2 Item(ns)</div>
  <div class="big" style="right:11.5px;top:61px;font-size:26px;letter-spacing:.8px">406,00</div>
</div>
<div class="pan" style="left:306px;width:289px">
  <div class="hd"></div>
  <div class="ttl" style="right:10px;top:5px;font-size:17.7px">Troca</div>
  <svg style="left:26px;top:9px" width="44" height="44" viewBox="-1.500 -2 44 44"><use href="#swap"/></svg>
  <div class="sm" style="right:10px;top:39px;font-size:11.1px">0 Item(ns), 0 Peça(s)</div>
  <div class="big" style="right:13px;top:61px;font-size:26px;letter-spacing:.8px">0,00</div>
</div>
<div class="pan" style="left:597px;width:263px">
  <div class="hd"></div>
  <div class="ttl" style="right:5px;top:6px;font-size:17.65px">Desconto</div>
  <div class="big" style="right:111px;top:34.5px;font-size:19.5px;letter-spacing:.5px">0,00</div>
  <div class="sm" style="left:154px;top:37.5px;font-size:12.8px">%</div>
  <div class="big" style="right:111px;top:66.5px;font-size:19.5px;letter-spacing:.5px">0,00</div>
  <div style="left:190px;top:39px;width:45px;height:43px;border:1px solid #fafafa;border-radius:4px;background:linear-gradient(180deg,#eee,#dcdcdc)"><svg style="left:2px;top:2px" width="38" height="38" viewBox="0 0 38 38"><use href="#dollar"/></svg></div>
</div>
<div class="pan" style="left:862px;width:288px">
  <div class="hd"></div>
  <div class="ttl" style="right:9px;top:3px;font-size:22.8px">Total</div>
  <div class="nw" id="sigma" style="left:24px;top:2.5px;font-weight:bold;font-size:37px;line-height:44px;color:#8fbaf2;transform:scaleX(1.28);transform-origin:0 0">Σ</div>
  <div class="nw" style="left:24px;top:27px;font-weight:bold;font-size:37px;line-height:44px;color:#8fbaf2;transform:scale(1.28,-1);transform-origin:0 50%;opacity:.35;-webkit-mask-image:linear-gradient(0deg,#000 25%,transparent 60%);mask-image:linear-gradient(0deg,#000 25%,transparent 60%)">Σ</div>
  <div class="big" style="right:6px;top:33px;font-size:23px;transform:scaleX(1.25);transform-origin:100% 0">2</div>
  <div class="big" style="right:5px;top:66px;font-size:30.5px;letter-spacing:1.2px">406,00</div>
</div>

<!-- STATUS -->
<div id="status">
  <div style="left:662px">Tipo de venda:</div>
  <div style="left:756px">VENDA COMANDATUBA</div>
  <div style="left:961px">Tabela de preço:</div>
  <div style="left:1067px">VENDA</div>
</div>
<svg style="left:1118px;top:738px" width="32" height="30" viewBox="1118 738 32 30"><path d="M1123.300 742.200 L1123.300 765.800 L1128.700 760.600 L1133.200 770 L1137.200 770 L1132.500 760 L1140.800 759.700Z" fill="#000" stroke="#fff" stroke-width="1.100" filter="url(#curshd)"/><defs><filter id="curshd" x="-30%" y="-30%" width="170%" height="170%"><feGaussianBlur in="SourceAlpha" stdDeviation=".8"/><feOffset dx="1.500" dy="1.500"/><feComponentTransfer><feFuncA type="linear" slope=".5"/></feComponentTransfer><feMerge><feMergeNode/><feMergeNode in="SourceGraphic"/></feMerge></filter></defs></svg>
</body>
</html>
